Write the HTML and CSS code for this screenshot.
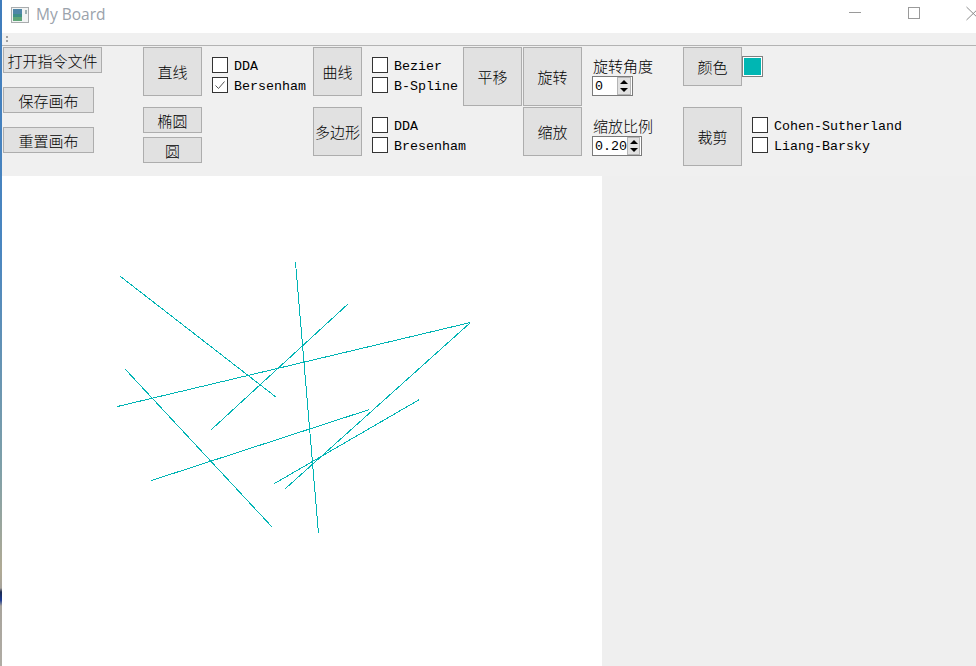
FILE: index.html
```html
<!DOCTYPE html>
<html>
<head>
<meta charset="utf-8"/>
<link rel="icon" href="data:,">
<link rel="stylesheet" href="styles.css">
<title>My Board</title>
</head>

<body>
<div class="App">
  <div class="EdgeStrip"></div>
  <div class="Window">

    <div class="TitleBar">
      <svg class="AppIcon" width="18" height="16" viewBox="0 0 18 16">
        <rect x="0.5" y="0.5" width="17" height="15" fill="#f2f4f4" stroke="#a9acae"/>
        <rect x="2" y="2" width="9" height="12" fill="#3f8f88"/>
        <rect x="2" y="2" width="9" height="5" fill="#4f86a8"/>
        <rect x="2" y="10" width="9" height="4" fill="#5fa578"/>
        <rect x="14" y="3" width="2" height="4" fill="#9fb4b4"/>
      </svg>
      <span class="TitleText">My Board</span>
      <svg class="WinControls" width="127" height="16" viewBox="0 0 127 16">
        <path d="M0 7.5H12" stroke="#9a9a9a" fill="none"/>
        <rect x="59.5" y="2.5" width="11" height="11" stroke="#9a9a9a" fill="none"/>
        <path d="M117.5 2L131 15M117.5 15L131 2" stroke="#8a8a8a" fill="none"/>
      </svg>
    </div>

    <div class="GripBar"><span class="Grip"></span></div>

    <div class="Tools">
      <div class="Cell FileCol">
        <button class="Btn W99">打开指令文件</button>
        <button class="Btn W91">保存画布</button>
        <button class="Btn W91">重置画布</button>
      </div>

      <button class="Btn W59 H49">直线</button>
      <div class="Checks">
        <label class="Check"><i class="Box"></i>DDA</label>
        <label class="Check"><i class="Box">
          <svg width="14" height="14" viewBox="0 0 14 14"><path d="M2.5 7.5L5.5 10.5L11.5 3.5" stroke="#555" fill="none"/></svg>
        </i>Bersenham</label>
      </div>

      <button class="Btn W49 H49">曲线</button>
      <div class="Checks">
        <label class="Check"><i class="Box"></i>Bezier</label>
        <label class="Check"><i class="Box"></i>B-Spline</label>
      </div>

      <button class="Btn W59 H59">平移</button>
      <button class="Btn W59 H59">旋转</button>

      <div class="SpinCol">
        <span class="SpinLabel">旋转角度</span>
        <div class="Spin W41">
          <span class="SpinValue">0</span>
          <span class="SpinBtns"><b class="Up"></b><b class="Down"></b></span>
        </div>
      </div>

      <div class="Cell ColorCell">
        <button class="Btn W59 H39">颜色</button>
        <span class="Swatch"><i></i></span>
      </div>

      <div class="Cell R2C2">
        <button class="Btn W59 H26">椭圆</button>
        <button class="Btn W59 H26">圆</button>
      </div>

      <button class="Btn W49 H49 R2C4">多边形</button>
      <div class="Checks R2C5">
        <label class="Check"><i class="Box"></i>DDA</label>
        <label class="Check"><i class="Box"></i>Bresenham</label>
      </div>

      <button class="Btn W59 H49 R2C7">缩放</button>
      <div class="SpinCol R2C8">
        <span class="SpinLabel">缩放比例</span>
        <div class="Spin W50">
          <span class="SpinValue">0.20</span>
          <span class="SpinBtns"><b class="Up"></b><b class="Down"></b></span>
        </div>
      </div>

      <button class="Btn W59 H59 R2C9">裁剪</button>
      <div class="Checks R2C10">
        <label class="Check"><i class="Box"></i>Cohen-Sutherland</label>
        <label class="Check"><i class="Box"></i>Liang-Barsky</label>
      </div>
    </div>

    <div class="Board">
      <svg class="Canvas" width="600" height="490" viewBox="2 176 600 490">
        <g stroke="#00b4b4" fill="none" shape-rendering="crispEdges" transform="translate(0.5 0.5)">
          <line x1="120" y1="276" x2="276" y2="397"/>
          <line x1="125" y1="369" x2="272" y2="527"/>
          <line x1="117" y1="406" x2="470" y2="322"/>
          <line x1="211" y1="429" x2="348" y2="303"/>
          <line x1="295" y1="262" x2="318" y2="533"/>
          <line x1="151" y1="480" x2="369" y2="409"/>
          <line x1="285" y1="488" x2="470" y2="322"/>
          <line x1="274" y1="483" x2="419" y2="399"/>
        </g>
      </svg>
    </div>

  </div>
</div>
</body>
</html>
```

FILE: styles.css
```css
html, body {
  margin: 0;
  height: 100%;
  overflow: hidden;
  background-color: #efefef;
}

.App {
  display: flex;
  height: 666px;
  font-family: "Liberation Mono", "Noto Sans CJK SC", monospace;
  color: #000000;
}

.EdgeStrip {
  width: 2px;
  flex: none;
  background: linear-gradient(to bottom, #3f7cbc 0, #4a86c0 250px, #7fa0a8 470px, #b0aa94 570px, #a8a49c 588px, #1c2a50 592px, #1c3a90 600px, #a8a49c 606px, #b0aca4 100%);
}

.Window {
  flex: 1;
  display: flex;
  flex-direction: column;
  min-width: 0;
}

/* title bar */
.TitleBar {
  height: 33px;
  background-color: #ffffff;
  display: flex;
  align-items: center;
  padding-left: 9px;
  flex: none;
}

.AppIcon {
  flex: none;
  margin-bottom: 4px;
}

.TitleText {
  margin-left: 7px;
  margin-bottom: 6px;
  font-family: "Open Sans", "Noto Sans", sans-serif;
  font-size: 15.5px;
  color: #9aa2ab;
}

.WinControls {
  margin-left: auto;
  margin-bottom: 8px;
  flex: none;
}

/* strip under the title */
.GripBar {
  background-color: #f0f0f0;
  border-bottom: 1px solid #b3b3b3;
  padding: 3px 0 0 4px;
  height: 9px;
  flex: none;
}

.Grip {
  display: block;
  width: 2px;
  height: 7px;
  background: repeating-linear-gradient(to bottom, #a0a0a0 0, #a0a0a0 2px, transparent 2px, transparent 4px);
}

/* tool panel */
.Tools {
  height: 129px;
  padding: 1px 0 0 1px;
  background-color: #f0f0f0;
  flex: none;
  display: grid;
  grid-template-columns: 140px 69px 101px 59px 91px 60px 69px 91px 69px 1fr;
  grid-template-rows: 60px 1fr;
  align-items: start;
}

.Cell {
  display: flex;
  flex-direction: column;
}

.FileCol {
  grid-row: 1 / 3;
  gap: 14px;
}

.R2C2 { grid-row: 2; grid-column: 2; gap: 4px; }
.R2C4 { grid-row: 2; grid-column: 4; }
.R2C5 { grid-row: 2; grid-column: 5; }
.R2C7 { grid-row: 2; grid-column: 7; }
.R2C8 { grid-row: 2; grid-column: 8; }
.R2C9 { grid-row: 2; grid-column: 9; }
.R2C10 { grid-row: 2; grid-column: 10; }

.ColorCell {
  grid-column: 9 / 11;
  flex-direction: row;
}

.Btn {
  margin: 0;
  padding: 0;
  background-color: #e1e1e1;
  border: 1px solid #adadad;
  box-sizing: border-box;
  font-family: "Noto Sans CJK SC", sans-serif;
  font-size: 15px;
  font-weight: 300;
  line-height: 1;
  color: #000000;
}

.W49 { width: 49px; }
.W59 { width: 59px; }
.W91 { width: 91px; height: 26px; }
.W99 { width: 99px; height: 26px; }
.H26 { height: 26px; }
.H39 { height: 39px; }
.H49 { height: 49px; }
.H59 { height: 59px; }

.Checks {
  display: flex;
  flex-direction: column;
  gap: 4px;
  padding-top: 10px;
}

.Check {
  display: flex;
  align-items: flex-start;
  gap: 6px;
  height: 16px;
  font-size: 13.33px;
  line-height: 20px;
  white-space: nowrap;
}

.Box {
  width: 16px;
  height: 16px;
  box-sizing: border-box;
  flex: none;
  background-color: #ffffff;
  border: 1px solid #333333;
  display: flex;
}

.SpinCol {
  display: flex;
  flex-direction: column;
  padding-top: 10px;
  align-items: flex-start;
}

.SpinLabel {
  font-family: "Noto Sans CJK SC", sans-serif;
  font-size: 15px;
  font-weight: 300;
  line-height: 17px;
  margin-bottom: 2px;
  padding-left: 1px;
}

.Spin {
  display: flex;
  justify-content: space-between;
  align-items: center;
  box-sizing: border-box;
  height: 20px;
  background-color: #ffffff;
  border: 1px solid #7a7a7a;
  padding: 0 1px 0 2px;
  font-size: 13.33px;
}

.SpinValue {
  line-height: 20px;
  padding-top: 2px;
}

.W41 { width: 41px; }
.W50 { width: 50px; }

.SpinBtns {
  display: flex;
  flex-direction: column;
  width: 12px;
  height: 16px;
  background-color: #e1e1e1;
  border: 1px solid #b5b5b5;
}

.SpinBtns b {
  flex: 1;
  display: flex;
  align-items: center;
  justify-content: center;
}

.Up::before, .Down::before {
  content: "";
  border-left: 4px solid transparent;
  border-right: 4px solid transparent;
}

.Up::before { border-bottom: 4px solid #000000; }
.Down::before { border-top: 4px solid #000000; }

.Swatch {
  display: block;
  width: 21px;
  height: 21px;
  margin-top: 9px;
  box-sizing: border-box;
  border: 1px solid #808080;
  padding: 1px;
  background-color: #ffffff;
}

.Swatch i {
  display: block;
  height: 100%;
  background-color: #00b6b3;
}

/* drawing area */
.Board {
  flex: 1;
  background-color: #efefef;
  min-height: 0;
}

.Canvas {
  display: block;
  background-color: #ffffff;
}
```
